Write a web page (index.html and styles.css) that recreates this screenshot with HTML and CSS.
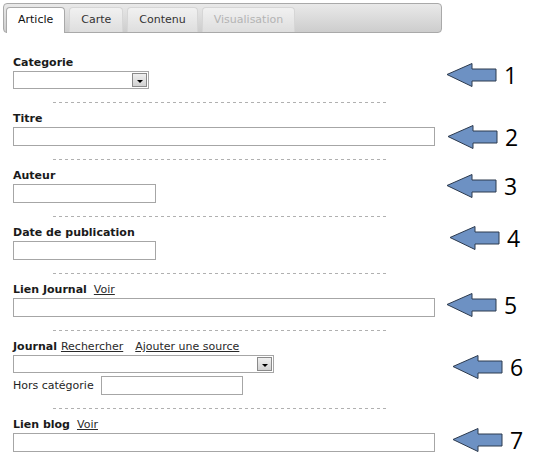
FILE: index.html
```html
<!DOCTYPE html>
<html lang="fr">
<head>
<meta charset="utf-8">
<title>Article</title>
<link rel="stylesheet" href="styles.css">
</head>
<body>
<div class="page">
  <div class="tabs">
    <div class="tab active">Article</div>
    <div class="tab">Carte</div>
    <div class="tab">Contenu</div>
    <div class="tab disabled">Visualisation</div>
  </div>

  <form class="form">
    <div class="field first">
      <div class="label"><b>Categorie</b></div>
      <div class="select sel-short"><span class="drop"></span></div>
    </div>
    <div class="sep"></div>

    <div class="field">
      <div class="label"><b>Titre</b></div>
      <div class="input wide"></div>
    </div>
    <div class="sep"></div>

    <div class="field">
      <div class="label"><b>Auteur</b></div>
      <div class="input short"></div>
    </div>
    <div class="sep"></div>

    <div class="field">
      <div class="label"><b>Date de publication</b></div>
      <div class="input short"></div>
    </div>
    <div class="sep"></div>

    <div class="field">
      <div class="label"><b>Lien Journal</b><a class="link gap7" href="#">Voir</a></div>
      <div class="input wide"></div>
    </div>
    <div class="sep"></div>

    <div class="field">
      <div class="label"><b>Journal</b><a class="link gap4" href="#">Rechercher</a><a class="link gap12" href="#">Ajouter une source</a></div>
      <div class="select sel-mid"><span class="drop"></span></div>
      <div class="hors">
        <span class="hors-label">Hors catégorie</span>
        <div class="input hors-input"></div>
      </div>
    </div>
    <div class="sep"></div>

    <div class="field">
      <div class="label"><b>Lien blog</b><a class="link gap7" href="#">Voir</a></div>
      <div class="input wide"></div>
    </div>
  </form>

  <div class="note n1"><svg class="arrow" viewBox="0 0 52 26" width="52" height="26"><path d="M1 12.5 L26 1.5 L26 7 L50 7 L50 19 L26 19 L26 24.5 Z"/></svg><span class="num">1</span></div>
  <div class="note n2"><svg class="arrow" viewBox="0 0 52 26" width="52" height="26"><path d="M1 12.5 L26 1.5 L26 7 L50 7 L50 19 L26 19 L26 24.5 Z"/></svg><span class="num">2</span></div>
  <div class="note n3"><svg class="arrow" viewBox="0 0 52 26" width="52" height="26"><path d="M1 12.5 L26 1.5 L26 7 L50 7 L50 19 L26 19 L26 24.5 Z"/></svg><span class="num">3</span></div>
  <div class="note n4"><svg class="arrow" viewBox="0 0 52 26" width="52" height="26"><path d="M1 12.5 L26 1.5 L26 7 L50 7 L50 19 L26 19 L26 24.5 Z"/></svg><span class="num">4</span></div>
  <div class="note n5"><svg class="arrow" viewBox="0 0 52 26" width="52" height="26"><path d="M1 12.5 L26 1.5 L26 7 L50 7 L50 19 L26 19 L26 24.5 Z"/></svg><span class="num">5</span></div>
  <div class="note n6"><svg class="arrow" viewBox="0 0 52 26" width="52" height="26"><path d="M1 12.5 L26 1.5 L26 7 L50 7 L50 19 L26 19 L26 24.5 Z"/></svg><span class="num">6</span></div>
  <div class="note n7"><svg class="arrow" viewBox="0 0 52 26" width="52" height="26"><path d="M1 12.5 L26 1.5 L26 7 L50 7 L50 19 L26 19 L26 24.5 Z"/></svg><span class="num">7</span></div>
</div>
</body>
</html>
```

FILE: styles.css
```css
html, body {
  margin: 0;
  padding: 0;
  background: #fff;
}
body {
  font-family: "DejaVu Sans", Verdana, sans-serif;
  font-size: 11px;
  color: #1e1e1e;
}
.page {
  position: relative;
  width: 540px;
  height: 474px;
  overflow: hidden;
}

/* Tabs */
.tabs {
  margin: 3px 0 0 3px;
  width: 435px;
  height: 28px;
  border: 1px solid #a9a9a9;
  border-radius: 4px;
  background: linear-gradient(#e9e9e9, #cdcdcd);
  display: flex;
  align-items: flex-end;
  gap: 4px;
  padding-left: 2px;
  box-sizing: content-box;
}
.tab {
  height: 24px;
  line-height: 24px;
  padding: 0 11px;
  border: 1px solid #d6d6d6;
  border-bottom: none;
  border-radius: 4px 4px 0 0;
  background: linear-gradient(#f1f1f1, #dedede);
  color: #333;
  font-size: 11px;
}
.tab.active {
  background: #fff;
  border-color: #a9a9a9;
  height: 25px;
  margin-bottom: -1px;
  color: #111;
}
.tab.disabled {
  color: #b4b4b4;
}

/* Form */
.form {
  padding-left: 13px;
  display: flex;
  flex-direction: column;
}
.field {
  display: flex;
  flex-direction: column;
  align-items: flex-start;
  padding-top: 9px;
}
.field.first {
  padding-top: 23px;
}
.label {
  height: 14px;
  line-height: 14px;
  margin-bottom: 1px;
  color: #1a1a1a;
  white-space: nowrap;
}
.label b {
  font-weight: bold;
}
.link {
  color: #2a2a2a;
  text-decoration: underline;
  font-weight: normal;
}
.gap4 { margin-left: 4px; }
.gap7 { margin-left: 7px; }
.gap12 { margin-left: 12px; }

.input {
  height: 17px;
  border: 1px solid #a6a6a6;
  background: #fff;
}
.input.wide { width: 420px; }
.input.short { width: 141px; }

.select {
  height: 16px;
  border: 1px solid #a6a6a6;
  background: #fff;
  display: flex;
  justify-content: flex-end;
  align-items: center;
  padding-right: 1px;
}
.sel-short { width: 133px; }
.sel-mid { width: 258px; }
.drop {
  width: 13px;
  height: 12px;
  border: 1px solid #8a8a8a;
  background: linear-gradient(#f0f0f0, #d2d2d2);
  display: flex;
  align-items: center;
  justify-content: center;
}
.drop::after {
  content: "";
  width: 0;
  height: 0;
  border-left: 3px solid transparent;
  border-right: 3px solid transparent;
  border-top: 3px solid #000;
  margin-top: 2px;
}

.hors {
  display: flex;
  align-items: center;
  margin-top: 3px;
  gap: 6px;
}
.hors-label {
  width: 82px;
  color: #1e1e1e;
}
.hors-input {
  width: 140px;
}

.sep {
  margin: 13px 0 0 40px;
  width: 335px;
  height: 1px;
  background: repeating-linear-gradient(90deg, #b0b0b0 0 3px, transparent 3px 6px);
}

/* Annotations */
.note {
  position: absolute;
  display: flex;
  align-items: center;
  gap: 6px;
}
.arrow path {
  fill: #6d91c3;
  stroke: #2c3a4e;
  stroke-width: 1;
  stroke-linejoin: miter;
}
.num {
  font-family: "Open Sans", "Liberation Sans", sans-serif;
  font-size: 23px;
  line-height: 26px;
  color: #000;
}
.n1 { left: 446px; top: 62px; }
.n2 { left: 447px; top: 124px; }
.n3 { left: 446px; top: 173px; }
.n4 { left: 449px; top: 225px; }
.n5 { left: 446px; top: 292px; }
.n6 { left: 452px; top: 354px; }
.n7 { left: 452px; top: 427px; }
```
